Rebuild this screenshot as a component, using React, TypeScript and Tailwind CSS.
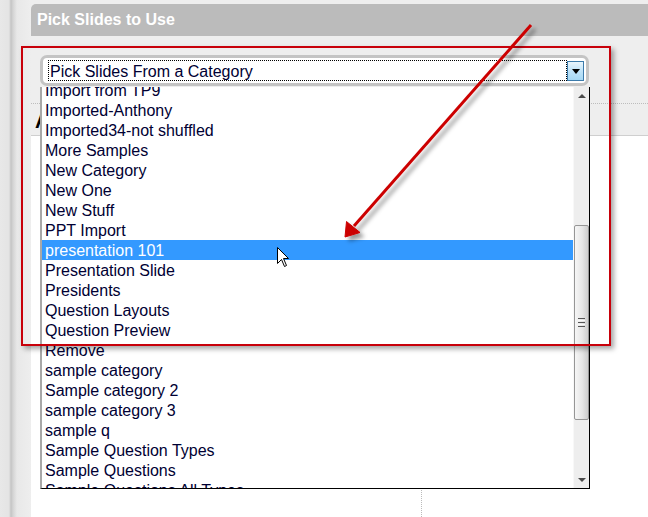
const categories = [
  "Import from TP9",
  "Imported-Anthony",
  "Imported34-not shuffled",
  "More Samples",
  "New Category",
  "New One",
  "New Stuff",
  "PPT Import",
  "presentation 101",
  "Presentation Slide",
  "Presidents",
  "Question Layouts",
  "Question Preview",
  "Remove",
  "sample category",
  "Sample category 2",
  "sample category 3",
  "sample q",
  "Sample Question Types",
  "Sample Questions",
  "Sample Questions All Types",
];

const selected = "presentation 101";

function SelectBox() {
  return (
    <div className="w-[549px] h-[31px] border-[3px] border-[#c4c4c4] rounded-[7px] bg-white flex items-start pl-[5px] pt-[2px]">
      <div className="w-[519px] h-[21px] border border-dotted border-black pl-[1px] pt-[1px] text-[16px] leading-[20px] text-[#000033] whitespace-nowrap">
        Pick Slides From a Category
      </div>
      <div className="mt-[1px] w-[17px] h-[20px] border border-[#3c7bab] bg-[linear-gradient(to_bottom,#eaf6fd,#bfe3f8_50%,#a6d8f4)] flex items-center justify-center">
        <svg width="8" height="5" viewBox="0 0 8 5">
          <polygon points="0,0 8,0 4,5" fill="#000" />
        </svg>
      </div>
    </div>
  );
}

function Scrollbar() {
  return (
    <div className="w-[16px] flex flex-col bg-[#eeeeee] border-l border-l-[#f8f8f8]">
      <div className="h-[17px] flex items-center justify-center">
        <svg width="8" height="4" viewBox="0 0 8 4">
          <polygon points="4,0 8,4 0,4" fill="#4a4a4a" />
        </svg>
      </div>
      <div className="flex-1 pt-[121px]">
        <div className="h-[195px] border border-[#969696] rounded-[2px] bg-[linear-gradient(to_right,#f6f6f6,#e6e6e6_55%,#cdcdcd)] flex items-center justify-center">
          <div className="flex flex-col gap-[1px]">
            <div className="w-[7px] h-[1px] bg-[#555]" />
            <div className="w-[7px] h-[1px] bg-[#f8f8f8]" />
            <div className="w-[7px] h-[1px] bg-[#555]" />
            <div className="w-[7px] h-[1px] bg-[#f8f8f8]" />
            <div className="w-[7px] h-[1px] bg-[#555]" />
          </div>
        </div>
      </div>
      <div className="h-[17px] flex items-center justify-center">
        <svg width="8" height="4" viewBox="0 0 8 4">
          <polygon points="0,0 8,0 4,4" fill="#4a4a4a" />
        </svg>
      </div>
    </div>
  );
}

function CategoryList() {
  return (
    <div className="absolute left-[40px] top-[87px] w-[550px] h-[402px] bg-white border-l-2 border-l-[#a8a8a8] border-r border-r-black border-b border-b-black flex">
      <div className="w-[531px] overflow-hidden">
        <div className="-mt-[7px]">
          {categories.map((c) => (
            <div
              key={c}
              className={`h-[20px] leading-[22px] pl-[3px] text-[16px] whitespace-nowrap ${
                c === selected ? "bg-[#3399ff] text-white" : "text-[#000033]"
              }`}
            >
              {c}
            </div>
          ))}
        </div>
      </div>
      <Scrollbar />
    </div>
  );
}

function Callout() {
  return (
    <>
      <div className="absolute left-[21px] top-[46px] w-[590px] h-[300px] border-2 border-[#c8000a] shadow-[3px_3px_5px_rgba(0,0,0,0.35)] pointer-events-none" />
      <svg className="absolute left-0 top-0 pointer-events-none" width="648" height="517">
        <defs>
          <filter id="arrowShadow" x="-20%" y="-20%" width="140%" height="140%">
            <feDropShadow dx="4" dy="4" stdDeviation="2" floodColor="#000" floodOpacity="0.4" />
          </filter>
        </defs>
        <g filter="url(#arrowShadow)">
          <line x1="531" y1="25" x2="354" y2="226" stroke="#cc0000" strokeWidth="3" />
          <polygon points="345,237 346.5,221.5 360,232.5" fill="#cc0000" stroke="#cc0000" strokeWidth="1" />
        </g>
        {/* mouse pointer */}
        <path
          d="M277.5 247.5 L277.5 263.5 L281.5 259.5 L284.5 266.5 L286.5 265.5 L283.5 258.5 L288.5 258.5 Z"
          fill="#fff"
          stroke="#000"
          strokeWidth="1"
          strokeLinejoin="round"
        />
      </svg>
    </>
  );
}

export default function App() {
  return (
    <div className="relative w-[648px] h-[517px] overflow-hidden flex bg-white font-['Liberation_Sans',Arial,sans-serif]">
      <div className="w-[31px] shrink-0 bg-[linear-gradient(to_right,#e8e8e8_0px,#e4e4e4_9px,#c4c4c4_11px,#d4d4d4_13px,#e8e8e8_17px,#eeeeee_31px)]" />
      <main className="flex-1 flex flex-col">
        <div className="bg-[#eeeeee] pt-[4px]">
          <div className="h-[32px] bg-[#bbbbbb] rounded-tl-[5px] flex items-center pl-[6px] text-white font-bold text-[16px]">
            Pick Slides to Use
          </div>
          <div className="pl-[9px] pt-[19px]">
            <SelectBox />
          </div>
          <div className="mt-[17px] border-t border-dotted border-[#bdbdbd]" />
          <div className="h-[32px] pl-[4px] pt-[3px] border-b border-[#cfcfcf] text-[20px] leading-[28px] font-bold text-black">
            Available Slides
          </div>
        </div>
        <div className="flex-1 grid grid-cols-[391px_1fr] bg-white">
          <div className="border-r border-dotted border-[#bbbbbb]" />
          <div />
        </div>
      </main>
      <CategoryList />
      <Callout />
    </div>
  );
}
